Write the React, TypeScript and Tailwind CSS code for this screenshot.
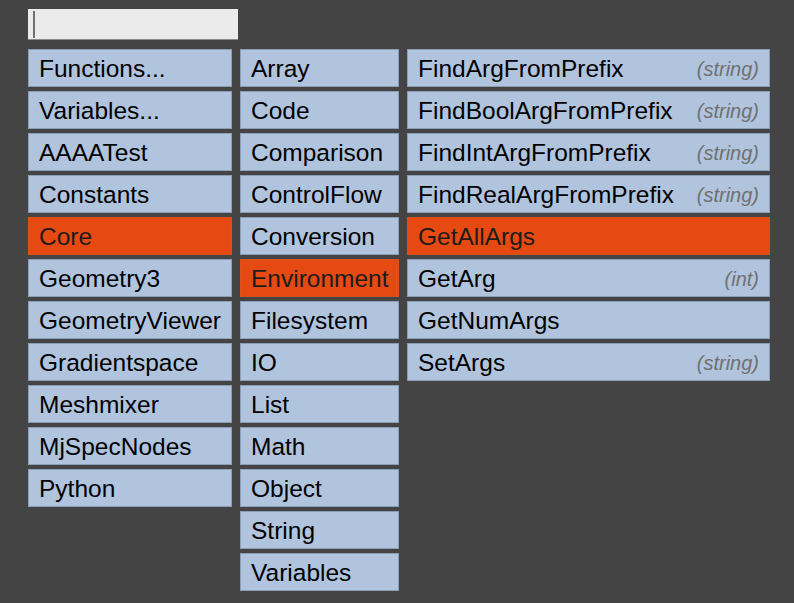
import React from "react";

type Item = { label: string; hint?: string; active?: boolean };

const groups: Item[] = [
  { label: "Functions..." },
  { label: "Variables..." },
  { label: "AAAATest" },
  { label: "Constants" },
  { label: "Core", active: true },
  { label: "Geometry3" },
  { label: "GeometryViewer" },
  { label: "Gradientspace" },
  { label: "Meshmixer" },
  { label: "MjSpecNodes" },
  { label: "Python" },
];

const categories: Item[] = [
  { label: "Array" },
  { label: "Code" },
  { label: "Comparison" },
  { label: "ControlFlow" },
  { label: "Conversion" },
  { label: "Environment", active: true },
  { label: "Filesystem" },
  { label: "IO" },
  { label: "List" },
  { label: "Math" },
  { label: "Object" },
  { label: "String" },
  { label: "Variables" },
];

const functions: Item[] = [
  { label: "FindArgFromPrefix", hint: "(string)" },
  { label: "FindBoolArgFromPrefix", hint: "(string)" },
  { label: "FindIntArgFromPrefix", hint: "(string)" },
  { label: "FindRealArgFromPrefix", hint: "(string)" },
  { label: "GetAllArgs", active: true },
  { label: "GetArg", hint: "(int)" },
  { label: "GetNumArgs" },
  { label: "SetArgs", hint: "(string)" },
];

function Row({ item }: { item: Item }) {
  return (
    <div
      className={
        item.active
          ? "flex h-[38px] items-center justify-between border border-[#d5531f] bg-[#e64a12] pl-[10px] pr-[10px] pt-[2px] text-[#1c1c1c]"
          : "flex h-[38px] items-center justify-between border border-[#8e9fb5] bg-[#b0c4de] pl-[10px] pr-[10px] pt-[2px] text-black"
      }
    >
      <span className="text-[24.5px] leading-none">{item.label}</span>
      {item.hint && (
        <span className="text-[20px] italic leading-none text-[#707070]">{item.hint}</span>
      )}
    </div>
  );
}

function Column({ items, width }: { items: Item[]; width: string }) {
  return (
    <div className={`flex flex-col gap-[4px] ${width}`}>
      {items.map((it) => (
        <Row key={it.label} item={it} />
      ))}
    </div>
  );
}

export default function App() {
  return (
    <div
      className="h-[603px] w-[794px] bg-[#444444] pl-[28px] pt-[9px]"
      style={{ fontFamily: '"Liberation Sans", Arial, sans-serif' }}
    >
      <div className="flex h-[31px] w-[210px] items-center border-b border-[#8a8a8a] bg-[#ebebeb] pl-[5px]">
        <div className="h-[27px] w-[2px] bg-[#707070]" />
      </div>
      <div className="mt-[9px] flex items-start gap-[8px]">
        <Column items={groups} width="w-[204px]" />
        <Column items={categories} width="w-[159px]" />
        <Column items={functions} width="w-[363px]" />
      </div>
    </div>
  );
}
